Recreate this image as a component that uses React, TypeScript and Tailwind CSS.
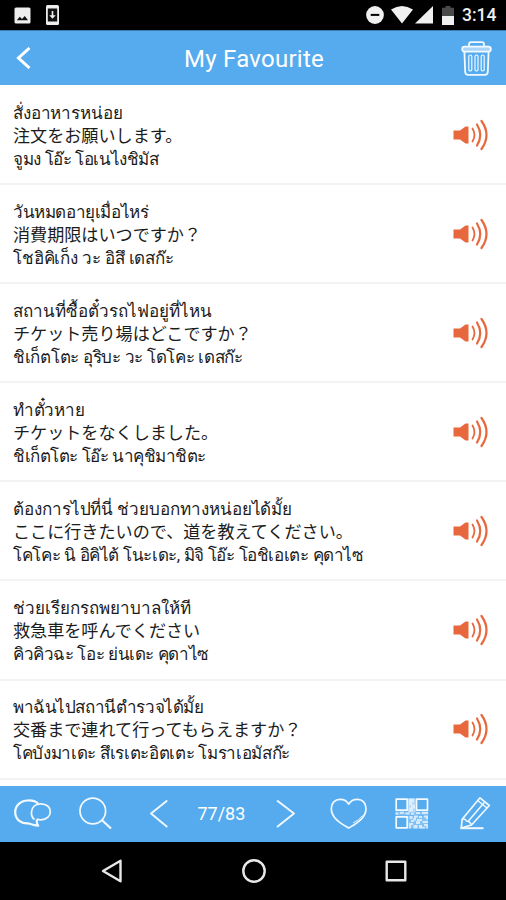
import React from "react";

interface Phrase {
  thai: string;
  japanese: string;
  reading: string;
  thaiTracking: string;
  readingTracking: string;
}

const phrases: Phrase[] = [
  { thai: "สั่งอาหารหน่อย", japanese: "注文をお願いします。", reading: "จูมง โอ๊ะ โอเนไงชิมัส", thaiTracking: "tracking-[-0.15px]", readingTracking: "tracking-[-0.4px]" },
  { thai: "วันหมดอายุเมื่อไหร่", japanese: "消費期限はいつですか？", reading: "โชฮิคิเก็ง วะ อิสึ เดสก๊ะ", thaiTracking: "tracking-[-0.4px]", readingTracking: "tracking-[-0.15px]" },
  { thai: "สถานที่ซื้อตั๋วรถไฟอยู่ที่ไหน", japanese: "チケット売り場はどこですか？", reading: "ชิเก็ตโตะ อุริบะ วะ โดโคะ เดสก๊ะ", thaiTracking: "tracking-normal", readingTracking: "tracking-[-0.3px]" },
  { thai: "ทำตั๋วหาย", japanese: "チケットをなくしました。", reading: "ชิเก็ตโตะ โอ๊ะ นาคุชิมาชิตะ", thaiTracking: "tracking-[-0.3px]", readingTracking: "tracking-[-0.45px]" },
  { thai: "ต้องการไปที่นี่ ช่วยบอกทางหน่อยได้มั้ย", japanese: "ここに行きたいので、道を教えてください。", reading: "โคโคะ นิ อิคิไต้ โนะเดะ, มิจิ โอ๊ะ โอชิเอเตะ คุดาไซ", thaiTracking: "tracking-[-0.07px]", readingTracking: "tracking-[-0.36px]" },
  { thai: "ช่วยเรียกรถพยาบาลให้ที", japanese: "救急車を呼んでください", reading: "คิวคิวฉะ โอะ ย่นเดะ คุดาไซ", thaiTracking: "tracking-normal", readingTracking: "tracking-[-0.4px]" },
  { thai: "พาฉันไปสถานีตำรวจได้มั้ย", japanese: "交番まで連れて行ってもらえますか？", reading: "โคบังมาเดะ สึเรเตะอิตเตะ โมราเอมัสก๊ะ", thaiTracking: "tracking-[-0.42px]", readingTracking: "tracking-[-0.33px]" },
];

const StatusBar: React.FC = () => (
  <div className="h-[30px] shrink-0 bg-black flex items-center pl-3.5 pr-2 text-[#f0f0f0]">
    <svg width="17" height="17" viewBox="0 0 17 17">
      <rect x="0.5" y="0.5" width="16" height="16" rx="1.5" fill="#eee" />
      <path d="M2.8 13.3 L5.8 9.8 L8 12 L10.8 9 L14 13.3Z" fill="#111" />
    </svg>
    <svg width="13" height="20" viewBox="0 0 13 20" className="ml-[15px]">
      <rect x="0" y="0" width="13" height="20" rx="1.5" fill="#eee" />
      <rect x="1.8" y="3.5" width="9.4" height="13" fill="#111" />
      <path d="M5.7 6h1.6v4.3h2.4L6.5 13.8 3.3 10.3h2.4Z" fill="#eee" />
    </svg>
    <svg width="18" height="18" viewBox="0 0 18 18" className="ml-auto">
      <circle cx="9" cy="9" r="8.9" fill="#f0f0f0" />
      <rect x="4.7" y="7.9" width="8.6" height="2" fill="#000" />
    </svg>
    <svg width="22" height="18" viewBox="0 0 22 18" className="ml-[7px]">
      <path d="M0 3.6 Q11 -3.6 22 3.6 L11 17.5Z" fill="#f0f0f0" />
    </svg>
    <svg width="18" height="18" viewBox="0 0 18 18" className="ml-[2px]">
      <path d="M0 17.5 L18 0 V17.5Z" fill="#f0f0f0" />
    </svg>
    <svg width="12" height="19" viewBox="0 0 12 19" className="ml-[9px]">
      <path d="M3.5 0h5v1.8H12V10H0V1.8h3.5Z" fill="#4a4a4a" />
      <rect y="10" width="12" height="9" fill="#f0f0f0" />
    </svg>
    <span className="ml-[8px] w-[36px] text-[17.5px] leading-none font-medium whitespace-nowrap pt-0.5">3:14</span>
  </div>
);

const Header: React.FC = () => (
  <header className="h-[55px] shrink-0 bg-[#55abee] border-t border-[#3c7cb0] flex items-center justify-between pl-4 pr-3.5 text-white">
    <button className="w-[31px]" aria-label="Back">
      <svg width="16" height="22" viewBox="0 0 16 22" fill="none" stroke="white" strokeWidth="3">
        <path d="M13.5 1 L2.5 11 L13.5 21" />
      </svg>
    </button>
    <h1 className="text-[24px] leading-none tracking-[0.25px] pt-0.5">My Favourite</h1>
    <button aria-label="Delete">
      <svg width="31" height="35" viewBox="0 0 31 35" fill="none" stroke="#f2f9ff" strokeWidth="1.8">
        <path d="M8 5.5 V3.5 Q8 1.2 10.3 1.2 H20.7 Q23 1.2 23 3.5 V5.5" />
        <rect x="1.2" y="5.7" width="28.6" height="5" rx="2.4" fill="#a9d4f7" />
        <path d="M3.4 10.7 L4.2 31 Q4.4 33.8 7.2 33.8 H23.8 Q26.6 33.8 26.8 31 L27.6 10.7" />
        <g strokeWidth="1.2">
          <rect x="7.8" y="14" width="3" height="16" rx="1.4" />
          <rect x="14" y="14" width="3" height="16" rx="1.4" />
          <rect x="20.2" y="14" width="3" height="16" rx="1.4" />
        </g>
      </svg>
    </button>
  </header>
);

const SpeakerIcon: React.FC = () => (
  <svg width="36" height="32" viewBox="0 0 36 32" fill="none" stroke="#e8683d" strokeWidth="2.2" strokeLinecap="round">
    <path d="M0.5 11.5 H7 L12.5 7.5 H15.5 V24.5 H12.5 L7 20.5 H0.5Z" fill="#e8683d" stroke="none" />
    <path d="M19.5 9.5 Q23.5 16 19.5 22.5" strokeWidth="1.8" />
    <path d="M24 5.5 Q30.5 16 24 26.5" />
    <path d="M28.5 2 Q38.5 16 28.5 30" />
  </svg>
);

const PhraseRow: React.FC<{ phrase: Phrase }> = ({ phrase }) => (
  <li className="h-[99.1px] shrink-0 border-b-2 border-[#f3f3f3] flex items-center justify-between pl-[13px] pr-[17px]">
    <div className="text-[17px] leading-[23px] text-[#1c1c1c] whitespace-nowrap pt-[3px]">
      <p className={`h-[23px] ${phrase.thaiTracking}`}>{phrase.thai}</p>
      <p className="h-[23px] text-[17.1px]" lang="ja">{phrase.japanese}</p>
      <p className={`h-[23px] ${phrase.readingTracking}`}>{phrase.reading}</p>
    </div>
    <button aria-label="Play">
      <SpeakerIcon />
    </button>
  </li>
);

const ToolIcon: React.FC<{ label: string; children: React.ReactNode }> = ({ label, children }) => (
  <button aria-label={label} className="flex items-center justify-center">
    <svg width="40" height="40" viewBox="0 0 40 40" fill="none" stroke="#f2f9ff" strokeWidth="1.7" strokeLinejoin="round">
      {children}
    </svg>
  </button>
);

const Toolbar: React.FC = () => (
  <footer className="h-14 shrink-0 bg-[#55abee] grid grid-cols-8 text-white">
    <ToolIcon label="Chat">
      <path d="M26.2 9.6 C23.5 7.2 19.5 6.3 15.8 6.5 C8 6.8 3.2 12 3.2 18.3 C3.2 25.5 9 29.7 16 29.4 C19.5 30 22.5 31.5 26.2 31.7 C24.8 30 24.4 28.5 24.8 26" strokeWidth="2.2" />
      <path d="M22.5 25.5 C20.3 23.8 19.2 21.2 19.5 18 C19.9 12.8 23.8 9.7 29 9.8 C34.5 9.9 38.3 13 38.3 17.7 C38.3 22.3 34.5 25.6 29 25.8 C27 25.8 25.5 25.5 24.5 25" />
    </ToolIcon>
    <ToolIcon label="Search">
      <circle cx="17.8" cy="17" r="12.8" />
      <path d="M26.8 26 L36 34.5" strokeWidth="2.2" />
    </ToolIcon>
    <ToolIcon label="Previous">
      <path d="M29.3 6.5 L13 19.5 L29.3 33" strokeWidth="1.9" />
    </ToolIcon>
    <div className="flex items-center justify-center text-[18px] leading-none">77/83</div>
    <ToolIcon label="Next">
      <path d="M12 6.5 L29 19.5 L12 33" strokeWidth="1.9" />
    </ToolIcon>
    <ToolIcon label="Favourite">
      <path d="M20.7 34 C15 30.5 3.3 25 3.3 14.5 C3.3 9 7 5.4 12 5.4 C16 5.4 19 7 20.7 10.2 C22.5 7 25.5 5.4 29.5 5.4 C34.5 5.4 38 9 38 14.5 C38 25 26.5 30.5 20.7 34Z" />
      <path d="M34.5 21.5 Q31.5 26 25 29" strokeWidth="0.9" />
    </ToolIcon>
    <ToolIcon label="QR code">
      <rect x="5.2" y="5.2" width="11" height="11" />
      <rect x="25.5" y="5.2" width="11" height="11" />
      <rect x="5.2" y="22.8" width="11" height="11" />
      <path d="M17 4.4h7.6v14H17Z" fill="#d6eafd" stroke="none" opacity="0.7" />
      <path d="M17 22h20v12.5H17Z M4.4 17.5h33v4h-33Z" fill="#d6eafd" stroke="none" opacity="0.35" />
      <g fill="#e4f1ff" stroke="none" opacity="0.85">
        <path d="M18 4.5h5v4h-2v2h3v4h-2v3h-4v-4h2v-2h-2Z" />
        <path d="M4.5 18.5h3v2h-3ZM9 17.7h4v2h-4ZM14.5 18.5h4v2h-4ZM20 18.8h3v2h-3ZM25 18h4v2h-4ZM31 17.7h6v2.2h-6Z" />
        <path d="M18.5 22h3v3h-3ZM23 21.5h4v2h-2v3h-3v-2h1ZM28 22h3v2h-3ZM33 21.5h4v4h-2v-2h-2ZM20 26h3v2h-3ZM26 25h5v2h-2v3h-4v-3h1ZM31.5 27h5.5v2h-5.5ZM18 29h4v2h-2v3.5h-2ZM22.5 31h4v3.5h-4ZM28 31h3v2h3v1.5h-6ZM33 30h4v4.5h-1.7V32H33Z" />
      </g>
    </ToolIcon>
    <ToolIcon label="Edit">
      <path d="M7.2 34 L8.2 25.2 L26 3.8 L35.3 11.5 L17.5 31 Z" />
      <path d="M8.2 25.2 Q11.5 24.5 12.3 27 Q16 27.2 17.5 31 M14 27.5 L30.5 8.2 M23.8 6.5 L33 14" strokeWidth="1.5" />
      <path d="M6.5 34.2 H29.5" strokeWidth="2" />
    </ToolIcon>
  </footer>
);

const AndroidNav: React.FC = () => (
  <nav className="h-[58px] shrink-0 bg-black flex items-center justify-center gap-[118px] pl-0.5">
    <svg width="24" height="24" viewBox="0 0 24 24" fill="none" stroke="#e8e8e8" strokeWidth="2.4" strokeLinejoin="round">
      <path d="M20.5 1.7 V22.3 L3 12Z" />
    </svg>
    <svg width="24" height="24" viewBox="0 0 24 24" fill="none" stroke="#e8e8e8" strokeWidth="2.4">
      <circle cx="12" cy="12" r="10.7" />
    </svg>
    <svg width="24" height="24" viewBox="0 0 24 24" fill="none" stroke="#e8e8e8" strokeWidth="2.4" strokeLinejoin="round">
      <rect x="2.7" y="2.7" width="18.6" height="18.6" />
    </svg>
  </nav>
);

const App: React.FC = () => {
  return (
    <div className="w-[506px] h-[900px] overflow-hidden flex flex-col bg-white font-[Roboto,'Noto_Sans_CJK_JP',sans-serif]">
      <StatusBar />
      <Header />
      <ul className="flex-1 min-h-0 overflow-hidden flex flex-col pt-px">
        {phrases.map((phrase) => (
          <PhraseRow key={phrase.japanese} phrase={phrase} />
        ))}
      </ul>
      <Toolbar />
      <AndroidNav />
    </div>
  );
};

export default App;
